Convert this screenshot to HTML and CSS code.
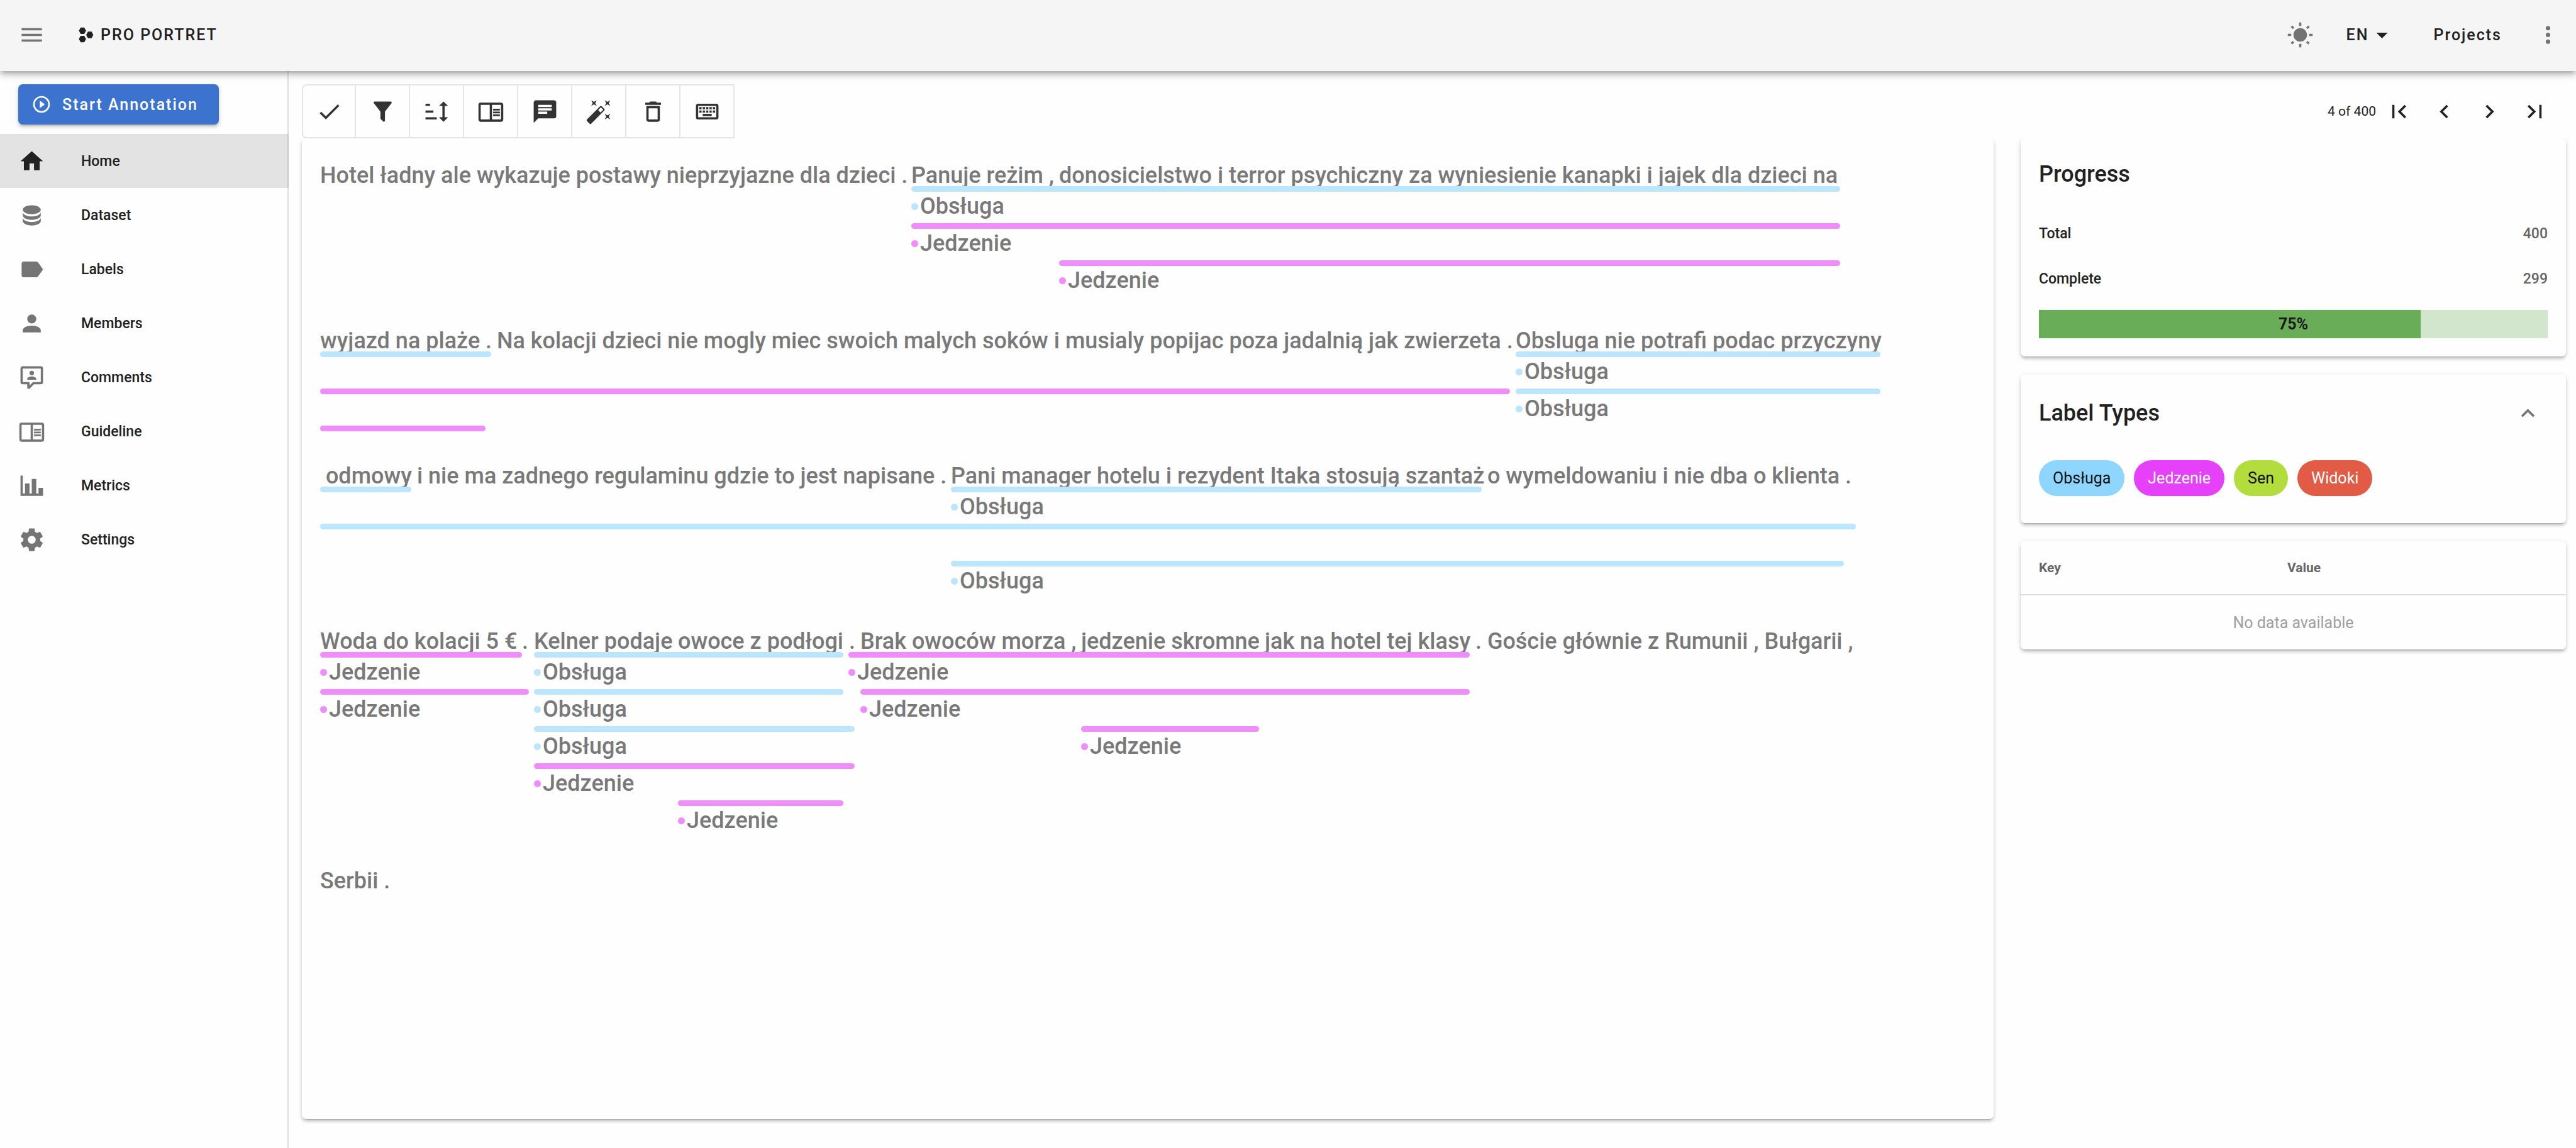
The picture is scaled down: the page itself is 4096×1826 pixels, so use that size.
FILE: index.html
```html
<!DOCTYPE html>
<html lang="en">
<head>
<meta charset="utf-8">
<title>Pro Portret</title>
<link rel="stylesheet" href="styles.css">
</head>
<body>
<svg class="sprite" aria-hidden="true">
  <symbol id="i-menu" viewBox="0 0 24 24"><path d="M3,6H21V8H3V6M3,11H21V13H3V11M3,16H21V18H3V16Z"/></symbol>
  <symbol id="i-sun" viewBox="0 0 24 24"><path d="M3.55 19.09L4.96 20.5L6.76 18.71L5.34 17.29M12 6C8.69 6 6 8.69 6 12S8.69 18 12 18 18 15.31 18 12C18 8.68 15.31 6 12 6M20 13H23V11H20M17.24 18.71L19.04 20.5L20.45 19.09L18.66 17.29M20.45 5L19.04 3.6L17.24 5.39L18.66 6.81M13 1H11V4H13M6.76 5.39L4.96 3.6L3.55 5L5.34 6.81L6.76 5.39M1 13H4V11H1M13 20H11V23H13"/></symbol>
  <symbol id="i-down" viewBox="0 0 24 24"><path d="M7,10L12,15L17,10H7Z"/></symbol>
  <symbol id="i-dots" viewBox="0 0 24 24"><path d="M12,16A2,2 0 0,1 14,18A2,2 0 0,1 12,20A2,2 0 0,1 10,18A2,2 0 0,1 12,16M12,10A2,2 0 0,1 14,12A2,2 0 0,1 12,14A2,2 0 0,1 10,12A2,2 0 0,1 12,10M12,4A2,2 0 0,1 14,6A2,2 0 0,1 12,8A2,2 0 0,1 10,6A2,2 0 0,1 12,4Z"/></symbol>
  <symbol id="i-play" viewBox="0 0 24 24"><path d="M12,20C7.59,20 4,16.41 4,12C4,7.59 7.59,4 12,4C16.41,4 20,7.59 20,12C20,16.41 16.41,20 12,20M12,2A10,10 0 0,0 2,12A10,10 0 0,0 12,22A10,10 0 0,0 22,12A10,10 0 0,0 12,2M10,16.5L16,12L10,7.5V16.5Z"/></symbol>
  <symbol id="i-home" viewBox="0 0 24 24"><path d="M10,20V14H14V20H19V12H22L12,3L2,12H5V20H10Z"/></symbol>
  <symbol id="i-database" viewBox="0 0 24 24"><path d="M12,3C7.58,3 4,4.79 4,7C4,9.21 7.58,11 12,11C16.42,11 20,9.21 20,7C20,4.79 16.42,3 12,3M4,9V12C4,14.21 7.58,16 12,16C16.42,16 20,14.21 20,12V9C20,11.21 16.42,13 12,13C7.58,13 4,11.21 4,9M4,14V17C4,19.21 7.58,21 12,21C16.42,21 20,19.21 20,17V14C20,16.21 16.42,18 12,18C7.58,18 4,16.21 4,14Z"/></symbol>
  <symbol id="i-label" viewBox="0 0 24 24"><path d="M17.63,5.84C17.27,5.33 16.67,5 16,5H5A2,2 0 0,0 3,7V17A2,2 0 0,0 5,19H16C16.67,19 17.27,18.66 17.63,18.15L22,12L17.63,5.84Z"/></symbol>
  <symbol id="i-account" viewBox="0 0 24 24"><path d="M12,4A4,4 0 0,1 16,8A4,4 0 0,1 12,12A4,4 0 0,1 8,8A4,4 0 0,1 12,4M12,14C16.42,14 20,15.79 20,18V20H4V18C4,15.79 7.58,14 12,14Z"/></symbol>
  <symbol id="i-comment" viewBox="0 0 24 24"><path d="M9,22A1,1 0 0,1 8,21V18H4A2,2 0 0,1 2,16V4C2,2.89 2.9,2 4,2H20A2,2 0 0,1 22,4V16A2,2 0 0,1 20,18H13.9L10.2,21.71C10,21.9 9.75,22 9.5,22V22H9M10,16V19.08L13.08,16H20V4H4V16H10M16,14H8V13C8,11.67 10.67,11 12,11C13.33,11 16,11.67 16,13V14M12,6A2,2 0 0,1 14,8A2,2 0 0,1 12,10A2,2 0 0,1 10,8A2,2 0 0,1 12,6Z"/></symbol>
  <symbol id="i-book" viewBox="0 0 24 24"><path d="M21,4H3A2,2 0 0,0 1,6V19A2,2 0 0,0 3,21H21A2,2 0 0,0 23,19V6A2,2 0 0,0 21,4M3,19V6H11V19H3M21,19H13V6H21V19M14,9.5H20V11H14V9.5M14,12H20V13.5H14V12M14,14.5H20V16H14V14.5Z"/></symbol>
  <symbol id="i-chart" viewBox="0 0 24 24"><path d="M22,21H2V3H4V19H6V10H10V19H12V6H16V19H18V14H22V21Z"/></symbol>
  <symbol id="i-cog" viewBox="0 0 24 24"><path d="M12,15.5A3.5,3.5 0 0,1 8.5,12A3.5,3.5 0 0,1 12,8.5A3.5,3.5 0 0,1 15.5,12A3.5,3.5 0 0,1 12,15.5M19.43,12.97C19.47,12.65 19.5,12.33 19.5,12C19.5,11.67 19.47,11.34 19.43,11L21.54,9.37C21.73,9.22 21.78,8.95 21.66,8.73L19.66,5.27C19.54,5.05 19.27,4.96 19.05,5.05L16.56,6.05C16.04,5.66 15.5,5.32 14.87,5.07L14.5,2.42C14.46,2.18 14.25,2 14,2H10C9.75,2 9.54,2.18 9.5,2.42L9.13,5.07C8.5,5.32 7.96,5.66 7.44,6.05L4.95,5.05C4.73,4.96 4.46,5.05 4.34,5.27L2.34,8.73C2.21,8.95 2.27,9.22 2.46,9.37L4.57,11C4.53,11.34 4.5,11.67 4.5,12C4.5,12.33 4.53,12.65 4.57,12.97L2.46,14.63C2.27,14.78 2.21,15.05 2.34,15.27L4.34,18.73C4.46,18.95 4.73,19.03 4.95,18.95L7.44,17.94C7.96,18.34 8.5,18.68 9.13,18.93L9.5,21.58C9.54,21.82 9.75,22 10,22H14C14.25,22 14.46,21.82 14.5,21.58L14.87,18.93C15.5,18.67 16.04,18.34 16.56,17.94L19.05,18.95C19.27,19.03 19.54,18.95 19.66,18.73L21.66,15.27C21.78,15.05 21.73,14.78 21.54,14.63L19.43,12.97Z"/></symbol>
  <symbol id="i-check" viewBox="0 0 24 24"><path d="M21,7L9,19L3.5,13.5L4.91,12.09L9,16.17L19.59,5.59L21,7Z"/></symbol>
  <symbol id="i-filter" viewBox="0 0 24 24"><path d="M14,12V19.88C14.04,20.18 13.94,20.5 13.71,20.71C13.32,21.1 12.69,21.1 12.3,20.71L10.29,18.7C10.06,18.47 9.96,18.16 10,17.87V12H9.97L4.21,4.62C3.87,4.19 3.95,3.56 4.38,3.22C4.57,3.08 4.78,3 5,3H19C19.22,3 19.43,3.08 19.62,3.22C20.05,3.56 20.13,4.19 19.79,4.62L14.03,12H14Z"/></symbol>
  <symbol id="i-sort" viewBox="0 0 24 24"><path d="M18 21L14 17H17V7H14L18 3L22 7H19V17H22M2 19V17H12V19M2 13V11H9V13M2 7V5H6V7H2Z"/></symbol>
  <symbol id="i-message" viewBox="0 0 24 24"><path d="M20,2A2,2 0 0,1 22,4V16A2,2 0 0,1 20,18H6L2,22V4C2,2.89 2.9,2 4,2H20M6,6V8H18V6H6M6,9V11H18V9H6M6,12V14H14V12H6Z" fill-rule="evenodd"/></symbol>
  <symbol id="i-wand" viewBox="0 0 24 24"><path d="M7.5,5.6L5,7L6.4,4.5L5,2L7.5,3.4L10,2L8.6,4.5L10,7L7.5,5.6M19.5,15.4L22,14L20.6,16.5L22,19L19.5,17.6L17,19L18.4,16.5L17,14L19.5,15.4M22,2L20.6,4.5L22,7L19.5,5.6L17,7L18.4,4.5L17,2L19.5,3.4L22,2M13.34,12.78L15.78,10.34L13.66,8.22L11.22,10.66L13.34,12.78M14.37,7.29L16.71,9.63C17.1,10 17.1,10.65 16.71,11.04L5.04,22.71C4.65,23.1 4,23.1 3.63,22.71L1.29,20.37C0.9,20 0.9,19.35 1.29,18.96L12.96,7.29C13.35,6.9 14,6.9 14.37,7.29Z"/></symbol>
  <symbol id="i-delete" viewBox="0 0 24 24"><path d="M6,19A2,2 0 0,0 8,21H16A2,2 0 0,0 18,19V7H6V19M8,9H16V19H8V9M15.5,4L14.5,3H9.5L8.5,4H5V6H19V4H15.5Z"/></symbol>
  <symbol id="i-keyboard" viewBox="0 0 24 24"><path d="M4,5A2,2 0 0,0 2,7V17A2,2 0 0,0 4,19H20A2,2 0 0,0 22,17V7A2,2 0 0,0 20,5H4M4,7H20V17H4V7M5,8V10H7V8H5M8,8V10H10V8H8M11,8V10H13V8H11M14,8V10H16V8H14M17,8V10H19V8H17M5,11V13H7V11H5M8,11V13H10V11H8M11,11V13H13V11H11M14,11V13H16V11H14M17,11V13H19V11H17M8,14V16H16V14H8Z"/></symbol>
  <symbol id="i-first" viewBox="0 0 24 24"><path d="M18.41,16.59L13.82,12L18.41,7.41L17,6L11,12L17,18L18.41,16.59M6,6H8V18H6V6Z"/></symbol>
  <symbol id="i-prev" viewBox="0 0 24 24"><path d="M15.41,16.58L10.83,12L15.41,7.41L14,6L8,12L14,18L15.41,16.58Z"/></symbol>
  <symbol id="i-next" viewBox="0 0 24 24"><path d="M8.59,16.58L13.17,12L8.59,7.41L10,6L16,12L10,18L8.59,16.58Z"/></symbol>
  <symbol id="i-last" viewBox="0 0 24 24"><path d="M5.59,7.41L10.18,12L5.59,16.59L7,18L13,12L7,6L5.59,7.41M16,6H18V18H16V6Z"/></symbol>
  <symbol id="i-up" viewBox="0 0 24 24"><path d="M7.41,15.41L12,10.83L16.59,15.41L18,14L12,8L6,14L7.41,15.41Z"/></symbol>
</svg>

<header class="topbar">
  <button class="plain muted" aria-label="Menu"><svg class="icon"><use href="#i-menu"/></svg></button>
  <a class="brand" href="#">
    <svg class="brand-mark" viewBox="0 0 26 28"><path d="M0 6.5L3.2 .8H9.6L12.8 6.5L9.6 12.3H3.2ZM13 14L16.2 8.2H22.6L25.8 14L22.6 19.8H16.2ZM0 21.4L3.2 15.7H9.6L12.8 21.4L9.6 27.2H3.2Z"/></svg>
    <span>PRO PORTRET</span>
  </a>
  <div class="topbar-actions">
    <button class="plain muted" aria-label="Toggle theme"><svg class="icon"><use href="#i-sun"/></svg></button>
    <button class="plain lang">EN<svg class="icon"><use href="#i-down"/></svg></button>
    <a class="toplink" href="#">Projects</a>
    <button class="plain muted" aria-label="More"><svg class="icon"><use href="#i-dots"/></svg></button>
  </div>
</header>

<div class="body">
  <aside class="sidebar">
    <button class="start"><svg class="icon-small"><use href="#i-play"/></svg>Start Annotation</button>
    <nav class="nav">
      <a class="nav-item active" href="#"><svg class="icon"><use href="#i-home"/></svg>Home</a>
      <a class="nav-item" href="#"><svg class="icon"><use href="#i-database"/></svg>Dataset</a>
      <a class="nav-item" href="#"><svg class="icon"><use href="#i-label"/></svg>Labels</a>
      <a class="nav-item" href="#"><svg class="icon"><use href="#i-account"/></svg>Members</a>
      <a class="nav-item" href="#"><svg class="icon"><use href="#i-comment"/></svg>Comments</a>
      <a class="nav-item" href="#"><svg class="icon"><use href="#i-book"/></svg>Guideline</a>
      <a class="nav-item" href="#"><svg class="icon"><use href="#i-chart"/></svg>Metrics</a>
      <a class="nav-item" href="#"><svg class="icon"><use href="#i-cog"/></svg>Settings</a>
    </nav>
  </aside>

  <main class="main">
    <div class="toolbar">
      <button class="tool" aria-label="Approve"><svg class="icon"><use href="#i-check"/></svg></button>
      <button class="tool" aria-label="Filter"><svg class="icon"><use href="#i-filter"/></svg></button>
      <button class="tool" aria-label="Sort"><svg class="icon"><use href="#i-sort"/></svg></button>
      <button class="tool" aria-label="Guideline"><svg class="icon"><use href="#i-book"/></svg></button>
      <button class="tool" aria-label="Comments"><svg class="icon"><use href="#i-message"/></svg></button>
      <button class="tool" aria-label="Auto label"><svg class="icon"><use href="#i-wand"/></svg></button>
      <button class="tool" aria-label="Clear"><svg class="icon"><use href="#i-delete"/></svg></button>
      <button class="tool" aria-label="Shortcuts"><svg class="icon"><use href="#i-keyboard"/></svg></button>
    </div>
    <div class="pager">
      <span>4 of 400</span>
      <button class="page" aria-label="First"><svg class="icon"><use href="#i-first"/></svg></button>
      <button class="page" aria-label="Previous"><svg class="icon"><use href="#i-prev"/></svg></button>
      <button class="page" aria-label="Next"><svg class="icon"><use href="#i-next"/></svg></button>
      <button class="page" aria-label="Last"><svg class="icon"><use href="#i-last"/></svg></button>
    </div>

    <section class="card editor">
      <div class="line">
        <p class="text"><span style="width:940px">Hotel ładny ale wykazuje postawy nieprzyjazne dla dzieci . </span><span style="width:235px">Panuje reżim , </span><span>donosicielstwo i terror psychiczny za wyniesienie kanapki i jajek dla dzieci na</span></p>
        <div class="track"><div class="mark blue" style="margin-left:940px;width:1477px"><span>Obsługa</span></div></div>
        <div class="track"><div class="mark pink" style="margin-left:940px;width:1477px"><span>Jedzenie</span></div></div>
        <div class="track"><div class="mark pink" style="margin-left:1175px;width:1242px"><span>Jedzenie</span></div></div>
      </div>
      <div class="line">
        <p class="text"><span style="width:272px">wyjazd na plaże .</span><span style="width:1629px"> Na kolacji dzieci nie mogly miec swoich malych soków i musialy popijac poza jadalnią jak zwierzeta . </span><span>Obsluga nie potrafi podac przyczyny</span></p>
        <div class="track"><div class="mark blue" style="width:272px"></div><div class="mark blue" style="margin-left:1629px;width:580px"><span>Obsługa</span></div></div>
        <div class="track"><div class="mark pink" style="width:1892px"></div><div class="mark blue" style="margin-left:9px;width:580px"><span>Obsługa</span></div></div>
        <div class="track unlabelled"><div class="mark pink" style="width:263px"></div></div>
      </div>
      <div class="line">
        <p class="text"><span style="width:145px"> odmowy</span><span style="width:858px"> i nie ma zadnego regulaminu gdzie to jest napisane . </span><span style="width:844px">Pani manager hotelu i rezydent Itaka stosują szantaż</span><span> o wymeldowaniu i nie dba o klienta .</span></p>
        <div class="track"><div class="mark blue" style="width:145px"></div><div class="mark blue" style="margin-left:858px;width:844px"><span>Obsługa</span></div></div>
        <div class="track"><div class="mark blue" style="width:2442px"></div></div>
        <div class="track"><div class="mark blue" style="margin-left:1003px;width:1420px"><span>Obsługa</span></div></div>
      </div>
      <div class="line">
        <p class="text"><span style="width:321px">Woda do kolacji 5 € </span><span style="width:19px">. </span><span style="width:229px">Kelner podaje </span><span style="width:263px">owoce z podłogi</span><span style="width:27px"> . </span><span style="width:351px">Brak owoców morza , </span><span style="width:283px">jedzenie skromne</span><span style="width:335px"> jak na hotel tej klasy</span><span> . Goście głównie z Rumunii , Bułgarii ,</span></p>
        <div class="track"><div class="mark pink" style="width:321px"><span>Jedzenie</span></div><div class="mark blue" style="margin-left:19px;width:492px"><span>Obsługa</span></div><div class="mark pink" style="margin-left:8px;width:988px"><span>Jedzenie</span></div></div>
        <div class="track"><div class="mark pink" style="width:332px"><span>Jedzenie</span></div><div class="mark blue" style="margin-left:8px;width:492px"><span>Obsługa</span></div><div class="mark pink" style="margin-left:27px;width:969px"><span>Jedzenie</span></div></div>
        <div class="track"><div class="mark blue" style="margin-left:340px;width:510px"><span>Obsługa</span></div><div class="mark pink" style="margin-left:360px;width:283px"><span>Jedzenie</span></div></div>
        <div class="track"><div class="mark pink" style="margin-left:340px;width:510px"><span>Jedzenie</span></div></div>
        <div class="track"><div class="mark pink" style="margin-left:569px;width:263px"><span>Jedzenie</span></div></div>
      </div>
      <div class="line"><p class="text">Serbii .</p></div>
    </section>

    <div class="side">
      <section class="card panel">
        <h2 class="title">Progress</h2>
        <dl class="stats">
          <div class="stat"><dt>Total</dt><dd>400</dd></div>
          <div class="stat"><dt>Complete</dt><dd>299</dd></div>
        </dl>
        <div class="progress" role="progressbar" aria-valuenow="75" aria-valuemin="0" aria-valuemax="100" aria-label="Complete">
          <div class="progress-fill" style="width:75%"></div>
          <strong class="progress-value">75%</strong>
        </div>
      </section>
      <section class="card panel">
        <div class="panel-head">
          <h2 class="title">Label Types</h2>
          <button class="toggle" aria-label="Collapse"><svg class="icon"><use href="#i-up"/></svg></button>
        </div>
        <div class="chips">
          <span class="chip sky">Obsługa</span>
          <span class="chip magenta">Jedzenie</span>
          <span class="chip lime">Sen</span>
          <span class="chip red">Widoki</span>
        </div>
      </section>
      <section class="card">
        <table class="meta">
          <thead><tr><th class="key" scope="col">Key</th><th scope="col">Value</th></tr></thead>
          <tbody><tr><td colspan="2">No data available</td></tr></tbody>
        </table>
      </section>
    </div>
  </main>
</div>
</body>
</html>
```
FILE: styles.css
```css
* { box-sizing: border-box; }

body {
  margin: 0;
  min-height: 100vh;
  display: flex;
  flex-direction: column;
  background: #fefefe;
  color: #212121;
  font-family: Roboto, "Noto Sans", sans-serif;
  font-size: 25px;
}

h2, p, dl, dd { margin: 0; }
a { color: inherit; text-decoration: none; }
button { font: inherit; color: inherit; padding: 0; border: 0; background: none; }

.sprite { display: none; }
.icon { width: 43px; height: 43px; display: block; fill: currentColor; flex: none; }
.icon-small { width: 32px; height: 32px; fill: currentColor; flex: none; }

/* Top bar */
.topbar {
  position: relative;
  z-index: 2;
  display: flex;
  align-items: center;
  height: 113px;
  padding: 0 23px 2px 29px;
  background: #f5f5f5;
  font-weight: 500;
  letter-spacing: 2px;
  box-shadow: 0 4px 7px -2px rgba(0,0,0,.2), 0 7px 9px rgba(0,0,0,.14), 0 2px 18px rgba(0,0,0,.12);
}
.muted { color: #737373; }
.brand { display: flex; align-items: center; gap: 11px; margin-left: 53px; }
.brand-mark { width: 24px; height: 25px; fill: currentColor; }
.topbar-actions { display: flex; align-items: center; gap: 52px; margin-left: auto; }
.plain { letter-spacing: inherit; font-weight: 500; }
.lang { display: flex; align-items: center; }
.toplink { padding-left: 8px; }

.body { flex: 1; display: flex; }

/* Sidebar */
.sidebar { flex: none; width: 459px; border-right: 2px solid #dedede; padding-top: 21px; }
.start {
  display: flex;
  align-items: center;
  gap: 17px;
  height: 64px;
  margin: 0 0 15px 29px;
  padding: 0 33px 0 21px;
  border-radius: 7px;
  background: #3b73cf;
  color: #fff;
  font-weight: 500;
  letter-spacing: 2px;
  box-shadow: 0 5px 2px -4px rgba(0,0,0,.2), 0 4px 4px rgba(0,0,0,.14), 0 2px 9px rgba(0,0,0,.12);
}
.nav-item {
  display: flex;
  align-items: center;
  gap: 57px;
  height: 86px;
  padding-left: 29px;
  font-size: 23px;
  font-weight: 500;
}
.nav-item .icon { color: #757575; }
.nav-item.active { background: #e3e3e3; margin-right: -2px; border-right: 2px solid #c8c8c8; }
.nav-item.active .icon { color: #212121; }

/* Main area */
.main {
  flex: 1;
  min-width: 0;
  display: grid;
  grid-template-columns: minmax(0, 1fr) 867px;
  grid-template-rows: auto 1fr;
  column-gap: 43px;
  padding: 21px 16px 46px 21px;
}
.toolbar {
  position: relative;
  z-index: 1;
  display: flex;
  justify-self: start;
  border: 2px solid #e4e4e4;
  border-right: 0;
  border-radius: 7px 0 0 7px;
}
.tool {
  display: grid;
  place-items: center;
  width: 86px;
  height: 82px;
  border-right: 2px solid #e4e4e4;
  color: #333;
}
.tool:first-child { width: 84px; }
.pager { display: flex; align-items: center; justify-content: flex-end; padding-right: 14px; font-size: 21px; }
.page { display: grid; place-items: center; width: 72px; height: 72px; }

.card {
  border-radius: 7px;
  background: #fefefe;
  box-shadow: 0 5px 2px -4px rgba(0,0,0,.2), 0 4px 4px rgba(0,0,0,.14), 0 2px 9px rgba(0,0,0,.12);
}

/* Annotated text */
.editor {
  padding: 42px 29px;
  color: #797979;
  font-size: 36px;
  font-weight: 500;
  clip-path: inset(0 -20px -20px -20px);
}
.line { padding-bottom: 52px; }
.text { display: flex; line-height: 34px; white-space: pre; }
.text span { flex: none; }
.track { display: flex; align-items: flex-start; height: 59px; }
.unlabelled { height: 11px; }
.mark { position: relative; flex: none; line-height: 46px; }
.mark::before { content: ""; display: block; height: 9px; border-radius: 5px; background: var(--ink); }
.mark span { display: flex; align-items: center; gap: 3px; }
.mark span::before { content: ""; width: 11px; height: 11px; border-radius: 50%; background: var(--ink); }
.blue { --ink: #bbe6fe; }
.pink { --ink: #f08cfb; }

/* Right column */
.side { display: flex; flex-direction: column; gap: 29px; min-width: 0; }
.side .card:first-child { clip-path: inset(0 -20px -20px -20px); }
.panel { padding: 29px; }
.title { font-size: 36px; font-weight: 500; line-height: 57px; }
.stats { padding: 29px 0 14px; }
.stat { display: flex; justify-content: space-between; align-items: center; height: 72px; font-size: 23px; font-weight: 500; }
.stat dd { color: #666; }
.progress { position: relative; display: grid; height: 45px; background: #d2e6cd; }
.progress-fill { grid-area: 1 / 1; background: #6aad58; }
.progress-value { grid-area: 1 / 1; place-self: center; color: #1a1a1a; }
.panel-head { display: flex; align-items: center; justify-content: space-between; height: 64px; margin-bottom: 43px; }
.toggle { display: grid; place-items: center; width: 64px; height: 64px; color: #757575; }
.chips { display: flex; gap: 15px; margin-bottom: 14px; }
.chip { height: 57px; padding: 0 22px; border-radius: 29px; line-height: 57px; }
.sky { background: #8ed6fd; color: #111; }
.magenta { background: #e640fa; color: #fff; }
.lime { background: #b2dd3c; color: #111; }
.red { background: #e25c45; color: #fff; }

.meta { width: 100%; table-layout: fixed; border-collapse: separate; border-spacing: 0; }
.meta th {
  height: 86px;
  padding: 0 29px;
  border-bottom: 2px solid #e0e0e0;
  color: #666;
  font-size: 21px;
  font-weight: 700;
  text-align: left;
}
.meta .key { width: 395px; }
.meta td { height: 86px; padding: 0 29px; color: #9f9f9f; text-align: center; }
```
